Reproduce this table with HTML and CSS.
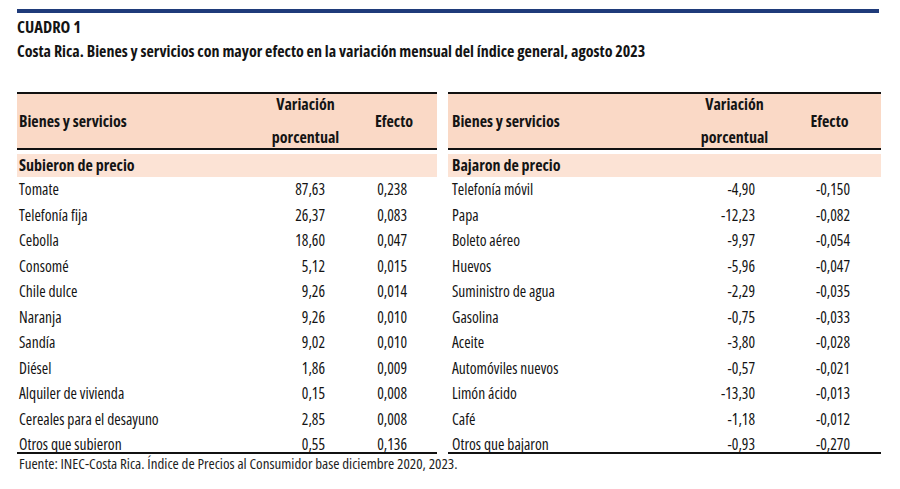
FILE: index.html
```html
<!DOCTYPE html>
<html lang="es">
<head>
<meta charset="utf-8">
<title>Cuadro 1</title>
<link rel="stylesheet" href="styles.css">
</head>
<body>
<div class="page">
  <div class="topbar"></div>
  <div class="label">CUADRO 1</div>
  <div class="title">Costa Rica. Bienes y servicios con mayor efecto en la variación mensual del índice general, agosto 2023</div>
  <div class="tables">
    <div class="tbl tbl-left">
      <div class="head">
        <div class="c1">Bienes y servicios</div>
        <div class="c2 hcenter">Variación<br>porcentual</div>
        <div class="c3 hcenter">Efecto</div>
      </div>
      <div class="sub">Subieron de precio</div>
      <div class="row"><div class="c1">Tomate</div><div class="c2">87,63</div><div class="c3">0,238</div></div>
      <div class="row"><div class="c1">Telefonía fija</div><div class="c2">26,37</div><div class="c3">0,083</div></div>
      <div class="row"><div class="c1">Cebolla</div><div class="c2">18,60</div><div class="c3">0,047</div></div>
      <div class="row"><div class="c1">Consomé</div><div class="c2">5,12</div><div class="c3">0,015</div></div>
      <div class="row"><div class="c1">Chile dulce</div><div class="c2">9,26</div><div class="c3">0,014</div></div>
      <div class="row"><div class="c1">Naranja</div><div class="c2">9,26</div><div class="c3">0,010</div></div>
      <div class="row"><div class="c1">Sandía</div><div class="c2">9,02</div><div class="c3">0,010</div></div>
      <div class="row"><div class="c1">Diésel</div><div class="c2">1,86</div><div class="c3">0,009</div></div>
      <div class="row"><div class="c1">Alquiler de vivienda</div><div class="c2">0,15</div><div class="c3">0,008</div></div>
      <div class="row"><div class="c1">Cereales para el desayuno</div><div class="c2">2,85</div><div class="c3">0,008</div></div>
      <div class="row last"><div class="c1">Otros que subieron</div><div class="c2">0,55</div><div class="c3">0,136</div></div>
    </div>
    <div class="tbl tbl-right">
      <div class="head">
        <div class="c1">Bienes y servicios</div>
        <div class="c2 hcenter">Variación<br>porcentual</div>
        <div class="c3 hcenter">Efecto</div>
      </div>
      <div class="sub">Bajaron de precio</div>
      <div class="row"><div class="c1">Telefonía móvil</div><div class="c2">-4,90</div><div class="c3">-0,150</div></div>
      <div class="row"><div class="c1">Papa</div><div class="c2">-12,23</div><div class="c3">-0,082</div></div>
      <div class="row"><div class="c1">Boleto aéreo</div><div class="c2">-9,97</div><div class="c3">-0,054</div></div>
      <div class="row"><div class="c1">Huevos</div><div class="c2">-5,96</div><div class="c3">-0,047</div></div>
      <div class="row"><div class="c1">Suministro de agua</div><div class="c2">-2,29</div><div class="c3">-0,035</div></div>
      <div class="row"><div class="c1">Gasolina</div><div class="c2">-0,75</div><div class="c3">-0,033</div></div>
      <div class="row"><div class="c1">Aceite</div><div class="c2">-3,80</div><div class="c3">-0,028</div></div>
      <div class="row"><div class="c1">Automóviles nuevos</div><div class="c2">-0,57</div><div class="c3">-0,021</div></div>
      <div class="row"><div class="c1">Limón ácido</div><div class="c2">-13,30</div><div class="c3">-0,013</div></div>
      <div class="row"><div class="c1">Café</div><div class="c2">-1,18</div><div class="c3">-0,012</div></div>
      <div class="row last"><div class="c1">Otros que bajaron</div><div class="c2">-0,93</div><div class="c3">-0,270</div></div>
    </div>
  </div>
  <div class="source">Fuente: INEC-Costa Rica. Índice de Precios al Consumidor base diciembre 2020, 2023.</div>
</div>
</body>
</html>
```
FILE: styles.css
```css
html, body {
  margin: 0;
  padding: 0;
  background: #ffffff;
}
body {
  font-family: "Open Sans", "Liberation Sans", sans-serif;
  font-stretch: 75%;
  color: #141414;
}
.page {
  padding: 9px 0 0 17px;
  width: 862px;
}
.topbar {
  height: 4px;
  background: #1f3b7a;
}
.label {
  margin-top: 3px;
  font-size: 16.5px;
  line-height: 22px;
  font-weight: 700;
}
.title {
  margin-top: 2px;
  font-size: 16px;
  line-height: 22px;
  font-weight: 700;
}
.tables {
  margin-top: 30px;
  display: flex;
  gap: 11px;
  width: 864px;
}
.tbl {
  border-top: 2px solid #111;
  border-bottom: 2px solid #111;
}
.tbl-left {
  width: 420px;
  --cols: 243px 91px 86px;
  --p2: 26px;
  --p3: 30px;
  --p1: 2px;
}
.tbl-right {
  width: 433px;
  --cols: 243px 87px 103px;
  --p2: 23px;
  --p3: 31px;
  --p1: 4px;
}
.head {
  display: grid;
  grid-template-columns: var(--cols);
  grid-template-rows: 54px;
  align-items: center;
  height: 54px;
  background: #fad9c6;
  border-bottom: 2px solid #111;
  font-weight: 700;
  font-size: 16px;
  line-height: 22px;
}
.head .c1 {
  padding-left: var(--p1);
}
.head .hcenter {
  text-align: center;
}
.head .c2 {
  line-height: 33px;
  margin: -6px 0;
}
.sub {
  margin-top: 4px;
  height: 23px;
  line-height: 23px;
  background: #fce3d5;
  font-weight: 700;
  font-size: 16px;
  padding-left: var(--p1);
}
.row {
  display: grid;
  grid-template-columns: var(--cols);
  height: 25.5px;
  line-height: 25.5px;
  font-size: 15.5px;
}
.row.last {
  height: 20px;
}
.row .c1 {
  padding-left: var(--p1);
  white-space: nowrap;
}
.row .c2 {
  text-align: right;
  padding-right: var(--p2);
}
.row .c3 {
  text-align: right;
  padding-right: var(--p3);
}
.source {
  font-size: 15px;
  line-height: 18px;
  padding-left: 2px;
  color: #1e1e1e;
}
```
